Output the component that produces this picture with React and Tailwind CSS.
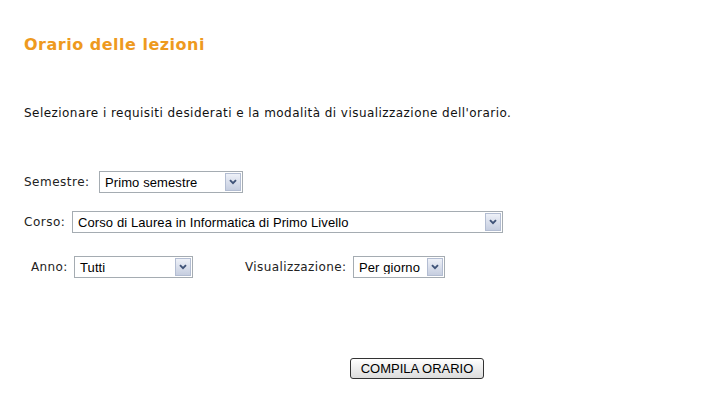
import React from "react";

function Select({ width, text }) {
  return (
    <div
      className="flex items-center h-[22px] border border-[#a5acb2] bg-white box-border"
      style={{ width }}
    >
      <span className="flex-1 pl-[5px] text-[13px] leading-none text-black whitespace-nowrap overflow-hidden tracking-[0.1px] [font-family:'Liberation_Sans',Arial,sans-serif]">
        {text}
      </span>
      <span className="mr-[1px] flex h-[18px] w-[16px] items-center justify-center border border-[#b3bdd2] bg-gradient-to-b from-[#eef1f8] to-[#c6cee0] box-border">
        <svg width="8" height="6" viewBox="0 0 8 6">
          <path d="M1 1.2 L4 4.2 L7 1.2" fill="none" stroke="#3f5378" strokeWidth="1.9" />
        </svg>
      </span>
    </div>
  );
}

export default function App() {
  const font = "[font-family:'DejaVu_Sans',Verdana,sans-serif]";
  return (
    <div className={`w-[726px] h-[414px] bg-white pl-[24px] pt-[36px] text-[#222] ${font}`}>
      <h1 className="text-[16px] font-bold leading-[18px] tracking-[0.5px] text-[#ee9a1e]">Orario delle lezioni</h1>
      <p className="mt-[52px] text-[12px] leading-[14px] tracking-[0.45px] text-[#111]">
        Selezionare i requisiti desiderati e la modalità di visualizzazione dell'orario.
      </p>
      <div className="mt-[51px] flex items-center text-[12px] tracking-[0.5px]">
        <span className="w-[75px]">Semestre:</span>
        <Select width={144} text="Primo semestre" />
      </div>
      <div className="mt-[18px] flex items-center text-[12px] tracking-[0.5px]">
        <span className="w-[48px]">Corso:</span>
        <Select width={431} text="Corso di Laurea in Informatica di Primo Livello" />
      </div>
      <div className="mt-[23px] flex items-center text-[12px] tracking-[0.4px]">
        <span className="ml-[7px] w-[43px]">Anno:</span>
        <Select width={119} text="Tutti" />
        <span className="ml-[52px] w-[108px]">Visualizzazione:</span>
        <Select width={92} text="Per giorno" />
      </div>
      <div className="mt-[80px] flex pl-[326px]">
        <button className="h-[21px] w-[134px] rounded-[3px] border border-[#333] bg-gradient-to-b from-[#ffffff] to-[#dcdcdc] text-[13px] leading-none text-black [font-family:'Liberation_Sans',Arial,sans-serif]">
          COMPILA ORARIO
        </button>
      </div>
    </div>
  );
}
